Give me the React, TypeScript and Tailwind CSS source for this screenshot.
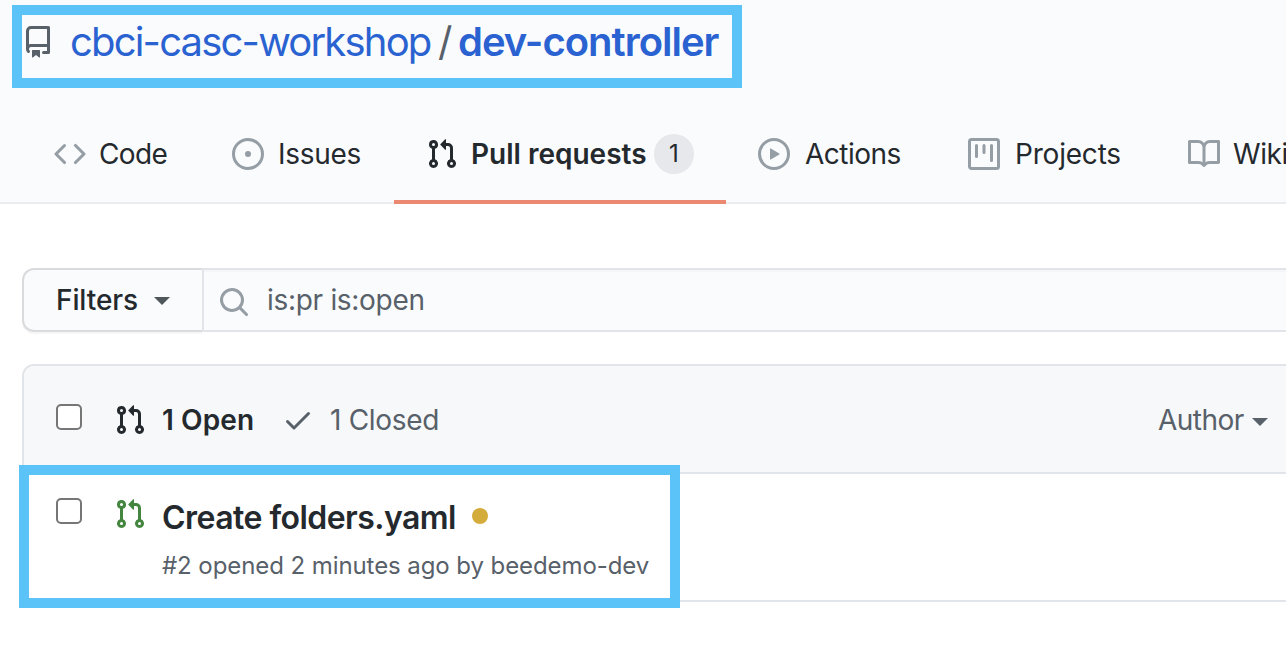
import type { ReactNode } from "react";

const paths = {
  repo: "M2 2.5A2.5 2.5 0 014.5 0h8.75a.75.75 0 01.75.75v12.5a.75.75 0 01-.75.75h-2.5a.75.75 0 110-1.5h1.75v-2h-8a1 1 0 00-.714 1.7.75.75 0 01-1.072 1.05A2.495 2.495 0 012 11.5v-9zm10.5-1V9h-8c-.356 0-.694.074-1 .208V2.5a1 1 0 011-1h8zM5 12.25v3.25a.25.25 0 00.4.2l1.45-1.087a.25.25 0 01.3 0L8.6 15.7a.25.25 0 00.4-.2v-3.25a.25.25 0 00-.25-.25h-3.5a.25.25 0 00-.25.25z",
  code: "M4.72 3.22a.75.75 0 011.06 1.06L2.06 8l3.72 3.72a.75.75 0 11-1.06 1.06L.47 8.53a.75.75 0 010-1.06l4.25-4.25zm6.56 0a.75.75 0 10-1.06 1.06L13.94 8l-3.72 3.72a.75.75 0 101.06 1.06l4.25-4.25a.75.75 0 000-1.06l-4.25-4.25z",
  issue:
    "M8 9.5a1.5 1.5 0 100-3 1.5 1.5 0 000 3zM8 0a8 8 0 100 16A8 8 0 008 0zM1.5 8a6.5 6.5 0 1113 0 6.5 6.5 0 01-13 0z",
  pull: "M7.177 3.073L9.573.677A.25.25 0 0110 .854v4.792a.25.25 0 01-.427.177L7.177 3.427a.25.25 0 010-.354zM3.75 2.5a.75.75 0 100 1.5.75.75 0 000-1.5zm-2.25.75a2.25 2.25 0 113 2.122v5.256a2.251 2.251 0 11-1.5 0V5.372A2.25 2.25 0 011.5 3.25zM11 2.5h-1V4h1a1 1 0 011 1v5.628a2.251 2.251 0 101.5 0V5A2.5 2.5 0 0011 2.5zm1 10.25a.75.75 0 111.5 0 .75.75 0 01-1.5 0zM3.75 12a.75.75 0 100 1.5.75.75 0 000-1.5z",
  play: "M1.5 8a6.5 6.5 0 1113 0 6.5 6.5 0 01-13 0zM8 0a8 8 0 100 16A8 8 0 008 0zM6.379 5.227A.25.25 0 006 5.442v5.117a.25.25 0 00.379.214l4.264-2.559a.25.25 0 000-.428L6.379 5.227z",
  project:
    "M1.75 0A1.75 1.75 0 000 1.75v12.5C0 15.216.784 16 1.75 16h12.5A1.75 1.75 0 0016 14.25V1.75A1.75 1.75 0 0014.25 0H1.75zM1.5 1.75a.25.25 0 01.25-.25h12.5a.25.25 0 01.25.25v12.5a.25.25 0 01-.25.25H1.75a.25.25 0 01-.25-.25V1.75zM11.75 3a.75.75 0 00-.75.75v7.5a.75.75 0 001.5 0v-7.5a.75.75 0 00-.75-.75zm-8.25.75a.75.75 0 011.5 0v5.5a.75.75 0 01-1.5 0v-5.5zM8 3a.75.75 0 00-.75.75v3.5a.75.75 0 001.5 0v-3.5A.75.75 0 008 3z",
  book: "M0 1.75A.75.75 0 01.75 1h4.253c1.227 0 2.317.59 3 1.501A3.744 3.744 0 0111.006 1h4.245a.75.75 0 01.75.75v10.5a.75.75 0 01-.75.75h-4.507a2.25 2.25 0 00-1.591.659l-.622.621a.75.75 0 01-1.06 0l-.622-.621A2.25 2.25 0 005.258 13H.75a.75.75 0 01-.75-.75V1.75zm8.755 3a2.25 2.25 0 012.25-2.25H14.5v9h-3.757c-.71 0-1.4.201-1.992.572l.004-7.322zm-1.504 7.324l.004-5.073-.002-2.253A2.25 2.25 0 005.003 2.5H1.5v9h3.757a3.75 3.75 0 011.994.574z",
  search:
    "M11.5 7a4.499 4.499 0 11-8.998 0A4.499 4.499 0 0111.5 7zm-.82 4.74a6 6 0 111.06-1.06l3.04 3.04a.75.75 0 11-1.06 1.06l-3.04-3.04z",
  check:
    "M13.78 4.22a.75.75 0 010 1.06l-7.25 7.25a.75.75 0 01-1.06 0L2.22 9.28a.75.75 0 011.06-1.06L6 10.94l6.72-6.72a.75.75 0 011.06 0z",
};

function Icon({ name, className = "" }: { name: keyof typeof paths; className?: string }) {
  return (
    <svg viewBox="0 0 16 16" fill="currentColor" fillRule="evenodd" className={`size-8 shrink-0 ${className}`}>
      <path d={paths[name]} />
    </svg>
  );
}

function Caret({ className }: { className: string }) {
  return (
    <svg viewBox="0 0 16 8" fill="currentColor" className={`h-2 w-4 shrink-0 ${className}`}>
      <path d="M0 0h16L8 8z" />
    </svg>
  );
}

function Tab({ icon, width, children }: { icon: keyof typeof paths; width: string; children: ReactNode }) {
  return (
    <a className={`flex h-full shrink-0 items-center gap-[13px] pl-8 ${width}`}>
      <Icon name={icon} className="text-[#959da5]" />
      {children}
    </a>
  );
}

function Checkbox() {
  return <span className="size-[26px] shrink-0 rounded-[5px] border-2 border-[#767676] bg-white" />;
}

export default function App() {
  return (
    <div className="relative h-[650px] w-[1286px] overflow-hidden bg-white font-['Inter',sans-serif] text-[28px] leading-10 whitespace-nowrap text-[#24292e]">
      <header className="flex h-[204px] flex-col border-b-2 border-[#eaecef] bg-[#fafbfd] pt-[5px]">
        <div className="ml-3 flex h-[83px] w-[730px] items-start border-10 border-[#5bc3f7] pt-[7px]">
          <Icon name="repo" className="mt-1 text-[#586069]" />
          <h1 className="flex pl-4 text-[40px] leading-[39px]">
            <a className="w-[368px] tracking-[-1.82px] text-[#2a63d1]">cbci-casc-workshop</a>
            <span className="w-[20px] text-[#586069]">/</span>
            <a className="font-semibold tracking-[-1px] text-[#2a63d1]">dev-controller</a>
          </h1>
        </div>
        <nav className="mt-4 -mb-0.5 flex h-[100px] pl-[22px]">
          <Tab icon="code" width="w-[178px]">
            <span className="tracking-[-0.6px]">Code</span>
          </Tab>
          <Tab icon="issue" width="w-[194px]">
            <span className="pl-px tracking-[-0.3px]">Issues</span>
          </Tab>
          <a className="flex h-full w-[332px] shrink-0 items-center border-b-4 border-[#eb8872] pt-1 pl-8">
            <Icon name="pull" />
            <span className="w-[184px] pl-[13px] font-semibold">Pull requests</span>
            <span className="ml-3 flex size-10 items-center justify-center rounded-full bg-[#e6e8eb] text-2xl">
              1
            </span>
          </a>
          <Tab icon="play" width="w-[210px]">
            <span className="pl-0.5 tracking-[-0.5px]">Actions</span>
          </Tab>
          <Tab icon="project" width="w-[220px]">
            <span className="pl-0.5 tracking-[-0.2px]">Projects</span>
          </Tab>
          <Tab icon="book" width="w-[180px]">
            <span className="tracking-[-0.4px]">Wiki</span>
          </Tab>
        </nav>
      </header>

      <main className="w-[1400px] pt-16 pl-[22px]">
        <div className="flex h-16">
          <button className="flex w-[180px] items-center rounded-l-xl border-2 border-r-0 border-[#d9dbdd] bg-[#fafbfd] pl-8 font-medium shadow-[0_2px_0_rgba(27,31,35,0.04)]">
            <span className="w-[98px] text-left tracking-[-0.1px]">Filters</span>
            <Caret className="mt-0.5 text-[#50575a]" />
          </button>
          <div className="flex flex-1 items-center border-2 border-[#e1e4e8] bg-[#fafbfd] pl-3.5 text-[#586069] shadow-[inset_0_2px_0_rgba(225,228,232,0.2)]">
            <Icon name="search" className="mt-1 text-[#959da5]" />
            <span className="pl-[17px] tracking-[-0.3px]">is:pr is:open</span>
          </div>
        </div>

        <section className="mt-8 h-[238px] overflow-hidden rounded-xl border-2 border-[#e1e4e8]">
          <div className="flex h-[108px] items-start border-b-2 border-[#e1e4e8] bg-[#f6f8fa] pt-[34px] pl-8 text-[#586069]">
            <span className="flex pt-1">
              <Checkbox />
            </span>
            <Icon name="pull" className="mt-1 ml-8 text-[#24292e]" />
            <span className="w-[121px] pl-4 font-semibold tracking-[0.1px] text-[#24292e]">1 Open</span>
            <Icon name="check" className="mt-1 ml-[15px]" />
            <span className="w-[844px] pl-4 tracking-[-0.3px]">1 Closed</span>
            <span className="w-[94px] tracking-[-0.55px]">Author</span>
            <Caret className="mt-[18px]" />
          </div>
          <div className="flex h-[126px] items-start bg-white pt-6 pl-8">
            <Checkbox />
            <Icon name="pull" className="ml-8 text-[#44863f]" />
            <div className="flex flex-col pl-4">
              <div className="flex items-center">
                <h2 className="text-[32px] font-semibold tracking-[-0.54px]">Create folders.yaml</h2>
                <span className="mb-1 ml-4 size-4 rounded-full bg-[#d4ac3b]" />
              </div>
              <p className="mt-2 text-2xl leading-10 tracking-[-0.08px] text-[#586069]">
                #2 opened 2 minutes ago by beedemo-dev
              </p>
            </div>
          </div>
        </section>
      </main>

      <div className="absolute top-[465px] left-[19px] h-[143px] w-[661px] border-10 border-[#5bc3f7]" />
    </div>
  );
}
